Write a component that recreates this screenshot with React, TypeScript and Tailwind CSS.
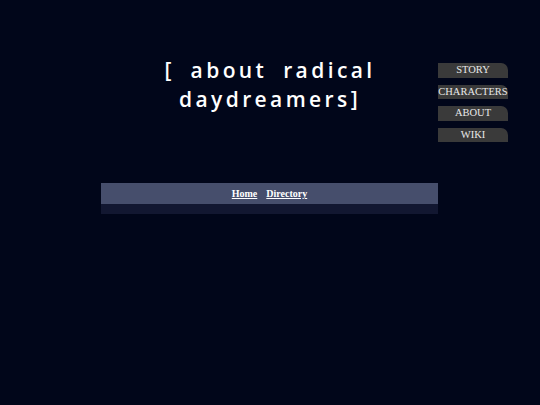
export default function App() {
  const nav = ["STORY", "CHARACTERS", "ABOUT", "WIKI"];
  return (
    <div className="relative h-[405px] w-[540px] overflow-hidden bg-[#01061a]">
      {/* Side navigation */}
      <div className="absolute left-[438px] top-[63px] flex w-[70px] flex-col gap-[7px]">
        {nav.map((n) => (
          <div
            key={n}
            className="flex h-[14.5px] items-center justify-center rounded-tr-[7px] bg-[#3a3a3a] text-[10.5px] leading-none text-[#e8e8e8]"
            style={{ fontFamily: '"Liberation Serif", serif' }}
          >
            {n}
          </div>
        ))}
      </div>

      <div className="flex flex-col items-center pt-[56px]">
        <h1
          className="w-[250px] text-center text-[21px] font-semibold leading-[29px] tracking-[3.4px] [word-spacing:7px] text-white"
          style={{ fontFamily: '"Open Sans", sans-serif' }}
        >
          [ about radical daydreamers]
        </h1>
      </div>

      <div className="ml-[101px] mt-[69px] w-[337px]">
        <div
          className="flex h-[21px] items-center justify-center gap-[9px] bg-[#464e6c] text-[10px] font-bold text-white"
          style={{ fontFamily: '"Liberation Serif", serif' }}
        >
          <a className="underline">Home</a>
          <a className="underline">Directory</a>
        </div>
        <div className="h-[10px] bg-[#121731]" />
      </div>
    </div>
  );
}
